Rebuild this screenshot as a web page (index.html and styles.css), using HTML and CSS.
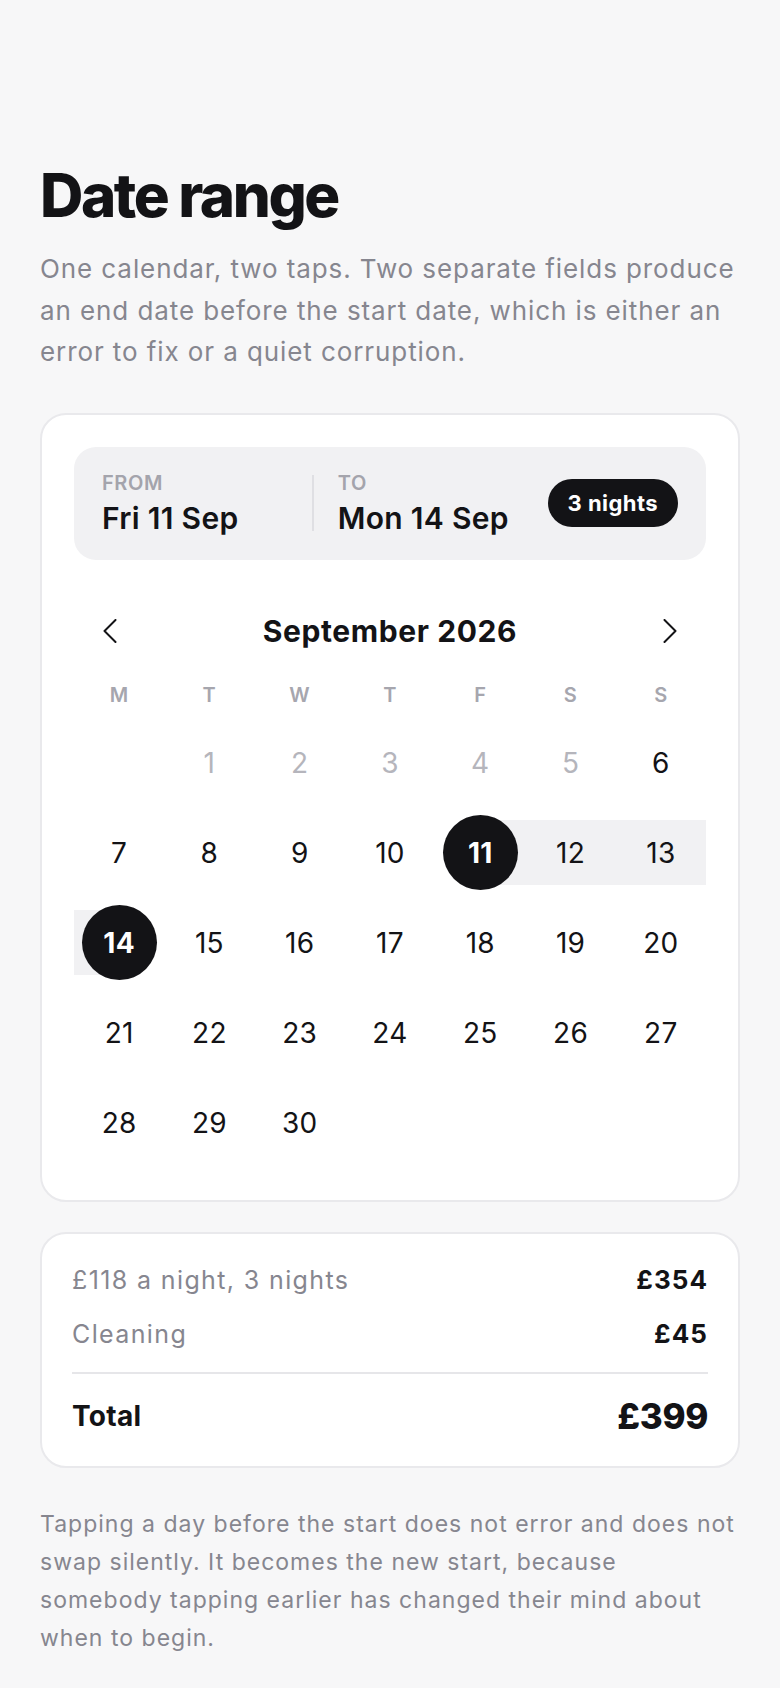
FILE: index.html
```html
<html>
  <head>
    <meta charset="utf-8" />
    <title>Date range</title>
    <link rel="stylesheet" href="styles.css">
  </head>
  <body>
    <main class="page">
      <h1 class="title">Date range</h1>
      <p class="lede">
        One calendar, two taps. Two separate fields produce an end date before
        the start date, which is either an error to fix or a quiet corruption.
      </p>

      <section class="card calendar">
        <div class="range">
          <div class="field">
            <span class="field-label">FROM</span>
            <span class="field-value">Fri 11 Sep</span>
          </div>
          <span class="sep"></span>
          <div class="field">
            <span class="field-label">TO</span>
            <span class="field-value">Mon 14 Sep</span>
          </div>
          <span class="nights">3 nights</span>
        </div>

        <div class="month-nav">
          <button class="nav-btn" aria-label="Previous month">
            <svg width="14" height="24" viewBox="0 0 14 24"><polyline points="12.5,1 1.5,12 12.5,23" /></svg>
          </button>
          <h2 class="month">September 2026</h2>
          <button class="nav-btn" aria-label="Next month">
            <svg width="14" height="24" viewBox="0 0 14 24"><polyline points="1.5,1 12.5,12 1.5,23" /></svg>
          </button>
        </div>

        <div class="weekdays">
          <span>M</span><span>T</span><span>W</span><span>T</span><span>F</span><span>S</span><span>S</span>
        </div>

        <div class="days">
          <div class="day"></div>
          <div class="day past"><span>1</span></div>
          <div class="day past"><span>2</span></div>
          <div class="day past"><span>3</span></div>
          <div class="day past"><span>4</span></div>
          <div class="day past"><span>5</span></div>
          <div class="day"><span>6</span></div>

          <div class="day"><span>7</span></div>
          <div class="day"><span>8</span></div>
          <div class="day"><span>9</span></div>
          <div class="day"><span>10</span></div>
          <div class="day start"><span><b>11</b></span></div>
          <div class="day between"><span>12</span></div>
          <div class="day between"><span>13</span></div>

          <div class="day end"><span><b>14</b></span></div>
          <div class="day"><span>15</span></div>
          <div class="day"><span>16</span></div>
          <div class="day"><span>17</span></div>
          <div class="day"><span>18</span></div>
          <div class="day"><span>19</span></div>
          <div class="day"><span>20</span></div>

          <div class="day"><span>21</span></div>
          <div class="day"><span>22</span></div>
          <div class="day"><span>23</span></div>
          <div class="day"><span>24</span></div>
          <div class="day"><span>25</span></div>
          <div class="day"><span>26</span></div>
          <div class="day"><span>27</span></div>

          <div class="day"><span>28</span></div>
          <div class="day"><span>29</span></div>
          <div class="day"><span>30</span></div>
        </div>
      </section>

      <section class="card summary">
        <div class="line">
          <span class="line-label">£118 a night, 3 nights</span>
          <span class="line-value">£354</span>
        </div>
        <div class="line">
          <span class="line-label">Cleaning</span>
          <span class="line-value">£45</span>
        </div>
        <div class="total">
          <span class="total-label">Total</span>
          <span class="total-value">£399</span>
        </div>
      </section>

      <p class="note">
        Tapping a day before the start does not error and does not swap
        silently. It becomes the new start, because somebody tapping earlier
        has changed their mind about when to begin.
      </p>
      <p class="note">
        The range stays visible as one band, so the nights being paid for are
        never a number to work out in your head.
      </p>
    </main>
  </body>
</html>
```

FILE: styles.css
```css
body {
  margin: 0;
  background: #f7f7f8;
  color: #131316;
  font-family: Inter, "Noto Sans", sans-serif;
}

.page {
  padding: 162px 40px 0;
}

.title {
  margin: 0;
  font-size: 60px;
  line-height: 66px;
  font-weight: 800;
  letter-spacing: -0.04em;
}

.lede {
  margin: 20px 0 40px;
  font-size: 26px;
  line-height: 1.6;
  letter-spacing: 0.035em;
  color: #86868f;
}

.card {
  background: #fff;
  border: 2px solid #e9e9ec;
  border-radius: 26px;
}

.calendar {
  padding: 32px;
}

/* from / to summary strip */
.range {
  display: flex;
  align-items: center;
  gap: 24px;
  padding: 24px 28px;
  background: #f1f1f3;
  border-radius: 22px;
}

.field {
  flex: 1;
  display: flex;
  flex-direction: column;
}

.field-label {
  font-size: 20px;
  line-height: 24px;
  font-weight: 600;
  letter-spacing: 0.03em;
  color: #a4a4ac;
}

.field-value {
  margin-top: 5px;
  font-size: 30px;
  line-height: 36px;
  font-weight: 600;
  letter-spacing: 0.01em;
}

.sep {
  width: 2px;
  height: 56px;
  background: #dfdfe3;
}

.nights {
  flex: none;
  height: 48px;
  padding: 0 20px;
  display: flex;
  align-items: center;
  border-radius: 24px;
  background: #131316;
  color: #fff;
  font-size: 22px;
  font-weight: 700;
  letter-spacing: 0.02em;
}

/* month header */
.month-nav {
  margin-top: 47px;
  height: 48px;
  padding: 0 12px;
  display: flex;
  align-items: center;
  justify-content: space-between;
}

.nav-btn {
  width: 48px;
  height: 48px;
  padding: 0;
  border: 0;
  background: none;
  display: flex;
  align-items: center;
  justify-content: center;
  cursor: pointer;
}

.nav-btn polyline {
  fill: none;
  stroke: #131316;
  stroke-width: 2;
  stroke-linecap: round;
  stroke-linejoin: round;
}

.month {
  margin: 0;
  font-size: 30px;
  font-weight: 700;
  letter-spacing: 0.02em;
}

.weekdays {
  margin-top: 28px;
  display: grid;
  grid-template-columns: repeat(7, 1fr);
  text-align: center;
  font-size: 20px;
  line-height: 24px;
  font-weight: 600;
  letter-spacing: 0.02em;
  color: #a6a6ae;
}

.days {
  margin-top: 11px;
  display: grid;
  grid-template-columns: repeat(7, 1fr);
}

.day {
  height: 90px;
  display: flex;
  align-items: center;
  font-size: 28px;
  letter-spacing: 0.01em;
}

.day span {
  width: 100%;
  height: 65px;
  display: flex;
  align-items: center;
  justify-content: center;
}

.day.past {
  color: #b5b5bc;
}

.day.between span {
  background: #f1f1f3;
}

.day.start span {
  background: linear-gradient(to right, transparent 50%, #f1f1f3 50%);
}

.day.end span {
  background: linear-gradient(to left, transparent 50%, #f1f1f3 50%);
}

.day b {
  flex: none;
  width: 75px;
  height: 75px;
  border-radius: 50%;
  background: #131316;
  color: #fff;
  font-weight: 700;
  display: flex;
  align-items: center;
  justify-content: center;
}

/* price breakdown */
.summary {
  margin-top: 30px;
  padding: 28px 30px;
}

.line {
  display: flex;
  align-items: center;
  justify-content: space-between;
  line-height: 36px;
}

.line + .line {
  margin-top: 18px;
}

.line-label {
  font-size: 25px;
  letter-spacing: 0.055em;
  color: #86868f;
}

.line-value {
  font-size: 26px;
  font-weight: 700;
  letter-spacing: 0.04em;
}

.total {
  margin-top: 20px;
  padding-top: 20px;
  height: 44px;
  border-top: 2px solid #e6e6e9;
  display: flex;
  align-items: center;
  justify-content: space-between;
}

.total-label {
  font-size: 28px;
  font-weight: 700;
  letter-spacing: 0.01em;
}

.total-value {
  font-size: 35px;
  font-weight: 800;
  letter-spacing: -0.01em;
}

.note {
  margin: 38px 0 0;
  font-size: 23px;
  line-height: 1.65;
  letter-spacing: 0.044em;
  color: #86868f;
}

.note + .note {
  margin-top: 23px;
}
```
